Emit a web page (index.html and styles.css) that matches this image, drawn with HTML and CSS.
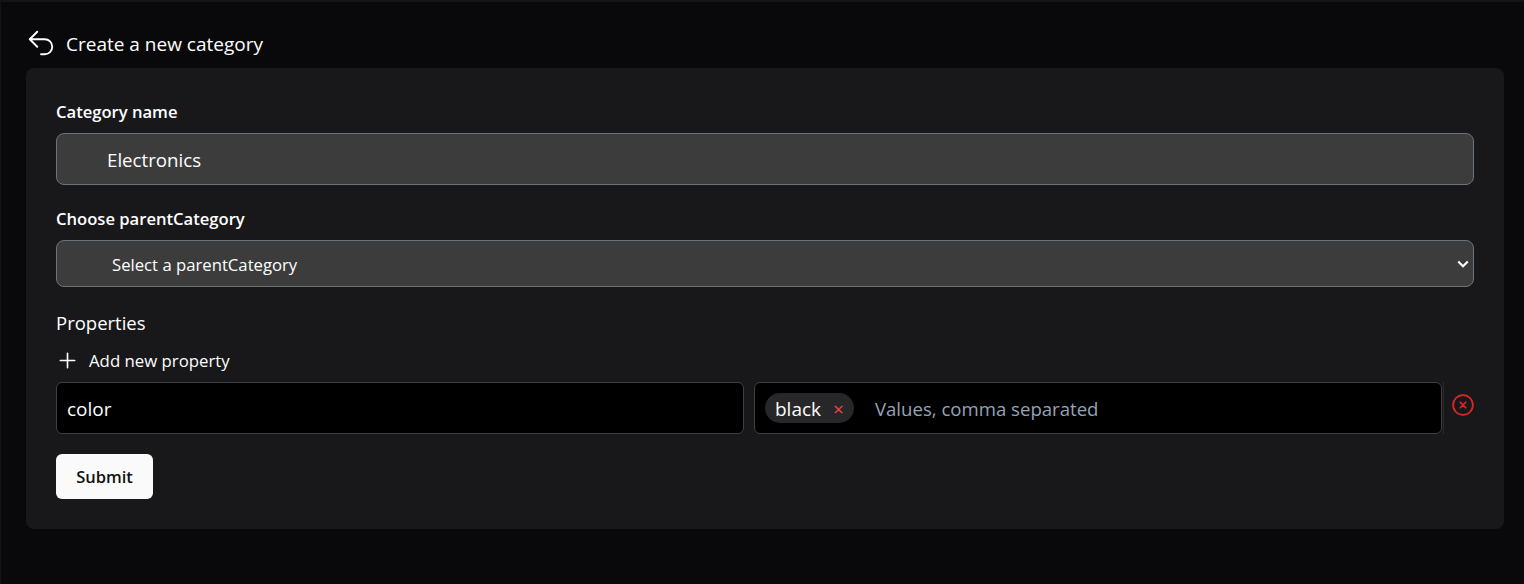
FILE: index.html
```html
<!DOCTYPE html>
<html lang="en">
<head>
<meta charset="utf-8">
<title>Create a new category</title>
<link rel="stylesheet" href="styles.css">
</head>
<body>
<main class="page">
  <header class="head">
    <svg class="back" viewBox="0 0 24 24" fill="none" stroke="currentColor" stroke-width="1.5" stroke-linecap="round" stroke-linejoin="round"><path d="M9 15 3 9m0 0 6-6M3 9h12a6 6 0 0 1 0 12h-3"/></svg>
    <h1 class="title">Create a new category</h1>
  </header>
  <form class="card">
    <label class="label">Category name</label>
    <div class="field name">Electronics</div>
    <label class="label second">Choose parentCategory</label>
    <div class="field select">
      <span>Select a parentCategory</span>
      <svg class="chev" viewBox="0 0 12 8" fill="none" stroke="currentColor" stroke-width="2.2"><path d="M1.2 1.5 6 6.200l4.800-4.700"/></svg>
    </div>
    <div class="props">Properties</div>
    <div class="add">
      <svg class="plus" viewBox="0 0 24 24" fill="none" stroke="currentColor" stroke-width="1.700" stroke-linecap="round"><path d="M12 4.500v15m7.500-7.500h-15"/></svg>
      <span>Add new property</span>
    </div>
    <div class="row">
      <div class="box name-box">color</div>
      <div class="box values">
        <span class="chip"><span class="chip-text">black</span><span class="chip-x">×</span></span>
        <span class="placeholder">Values, comma separated</span>
      </div>
      <svg class="remove" viewBox="2 2 20 20" fill="none" stroke="currentColor" stroke-width="1.600" stroke-linecap="round" stroke-linejoin="round"><path d="m9.500 9.500 5 5m0-5-5 5M21 12a9 9 0 1 1-18 0 9 9 0 0 1 18 0Z"/></svg>
    </div>
    <button class="submit" type="button">Submit</button>
  </form>
</main>
</body>
</html>
```
FILE: styles.css
```css
* { box-sizing: border-box; }
html, body { margin: 0; height: 100%; }
body {
  background: #09090b;
  color: #fff;
  font-family: "Open Sans", "Noto Sans", sans-serif;
  overflow: hidden;
}
.page {
  height: 584px;
  padding: 26px 20px 0 25px;
  border-top: 2px solid #141417;
  border-left: 1px solid #141417;
}
.head { display: flex; align-items: center; height: 40px; padding-bottom: 10px; }
.back { width: 30px; height: 30px; flex: none; color: #fff; }
.title { margin: 0 0 0 10px; font-size: 19px; font-weight: 400; line-height: 30px; position: relative; top: 1px; }
.card {
  background: #18181b;
  border-radius: 8px;
  padding: 30px;
  height: 461px;
  display: flex;
  flex-direction: column;
}
.label { font-size: 16.600px; font-weight: 600; line-height: 28px; height: 35px; }
.second { margin-top: 20px; }
.field {
  background: #3c3c3d;
  border: 1px solid #6b7280;
  border-radius: 8px;
  display: flex;
  align-items: center;
  flex: none;
}
.name { height: 52px; padding-left: 50px; font-size: 18.700px; }
.select { height: 47px; padding: 2px 4px 0 55px; font-size: 16.700px; justify-content: space-between; }
.chev { width: 12px; height: 8px; margin-top: -2px; }
.props { margin-top: 20px; font-size: 18.500px; line-height: 32px; }
.add { display: flex; align-items: center; gap: 10px; height: 30px; margin-top: 6px; font-size: 16.800px; }
.plus { width: 23px; height: 23px; flex: none; }
.row { display: flex; gap: 10px; margin-top: 7px; align-items: flex-start; }
.box {
  flex: 1;
  height: 52px;
  background: #000;
  border: 1px solid #3f3f41;
  border-radius: 6px;
  display: flex;
  align-items: center;
  padding-left: 10px;
  font-size: 19px;
}
.name-box { padding-top: 2px; }
.values { position: relative; font-size: 18.600px; }
.values::after {
  content: "";
  position: absolute;
  top: -1px;
  bottom: -1px;
  right: -3px;
  width: 1px;
  background: #2b2b2d;
}
.chip {
  display: inline-flex;
  align-items: center;
  height: 30px;
  padding: 0 10px;
  background: #27272a;
  border-radius: 15px;
  font-size: 19px;
}
.chip-text { padding-top: 2px; }
.chip-x { color: #ef4444; margin-left: 12px; font-size: 19px; line-height: 1; padding-top: 2px; }
.placeholder { color: #94a3b8; margin-left: 21px; }
.remove { width: 22px; height: 22px; color: #dc2626; margin-top: 12px; flex: none; }
.submit {
  align-self: flex-start;
  margin-top: 20px;
  width: 97px;
  height: 45px;
  background: #fafafa;
  color: #111;
  border: 0;
  border-radius: 6px;
  font: 600 16.500px "Open Sans", sans-serif;
}
```
